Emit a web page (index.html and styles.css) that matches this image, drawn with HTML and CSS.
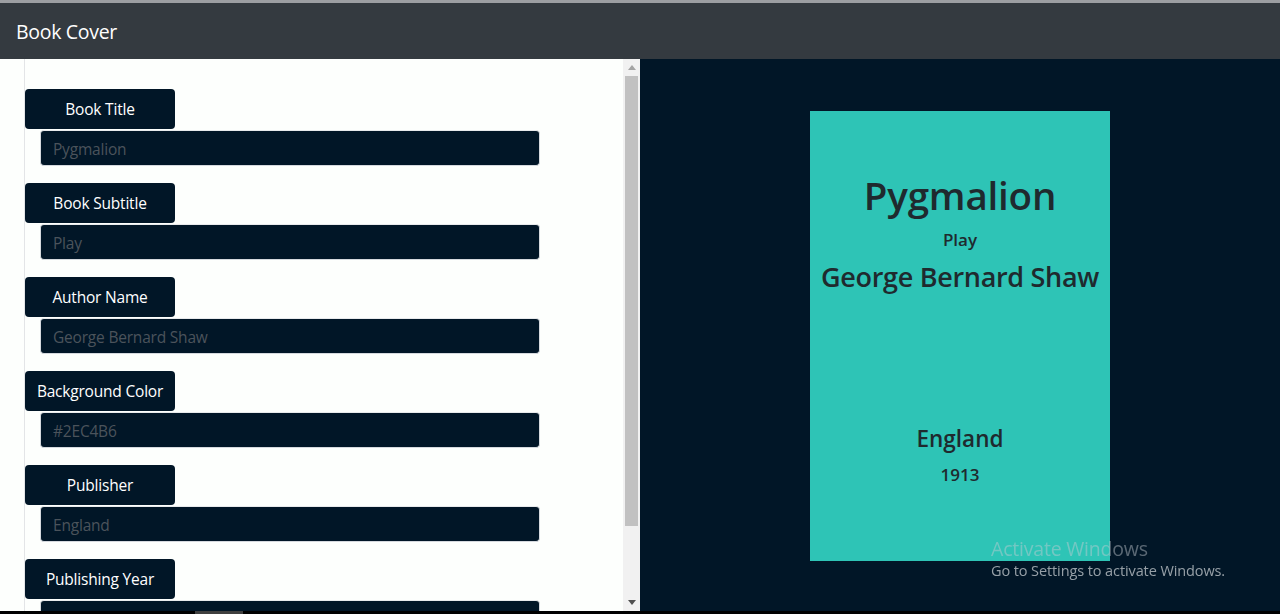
FILE: index.html
```html
<!DOCTYPE html>
<html lang="en">
<head>
<meta charset="utf-8">
<title>Book Cover</title>
<link rel="stylesheet" href="styles.css">
</head>
<body>
<div class="topline"></div>
<header class="navbar"><span class="brand">Book Cover</span></header>
<main class="layout">
  <section class="editor">
    <div class="editor-scroll">
      <form class="form">
        <div class="group">
          <label class="label">Book Title</label>
          <input class="field" type="text" placeholder="Pygmalion">
        </div>
        <div class="group">
          <label class="label">Book Subtitle</label>
          <input class="field" type="text" placeholder="Play">
        </div>
        <div class="group">
          <label class="label">Author Name</label>
          <input class="field" type="text" placeholder="George Bernard Shaw">
        </div>
        <div class="group">
          <label class="label">Background Color</label>
          <input class="field" type="text" placeholder="#2EC4B6">
        </div>
        <div class="group">
          <label class="label">Publisher</label>
          <input class="field" type="text" placeholder="England">
        </div>
        <div class="group">
          <label class="label">Publishing Year</label>
          <input class="field" type="text" placeholder="1913">
        </div>
      </form>
    </div>
    <div class="scrollbar" aria-hidden="true">
      <div class="sb-btn">
        <svg width="8" height="5" viewBox="0 0 8 5"><polygon points="0,5 8,5 4,0" fill="#a3a3a3"/></svg>
      </div>
      <div class="sb-track"><div class="sb-thumb"></div></div>
      <div class="sb-btn">
        <svg width="8" height="5" viewBox="0 0 8 5"><polygon points="0,0 8,0 4,5" fill="#505050"/></svg>
      </div>
    </div>
  </section>
  <section class="preview">
    <div class="cover">
      <h1 class="cover-title">Pygmalion</h1>
      <p class="cover-subtitle">Play</p>
      <h2 class="cover-author">George Bernard Shaw</h2>
      <h3 class="cover-publisher">England</h3>
      <p class="cover-year">1913</p>
    </div>
  </section>
</main>
<div class="bottombar"><span class="bottom-thumb"></span></div>
<div class="watermark">
  <div class="wm-title">Activate Windows</div>
  <div class="wm-sub">Go to Settings to activate Windows.</div>
</div>
</body>
</html>
```

FILE: styles.css
```css
* { box-sizing: border-box; }

html, body {
  margin: 0;
  padding: 0;
  height: 614px;
  overflow: hidden;
}

body {
  display: flex;
  flex-direction: column;
  font-family: "Open Sans", "Noto Sans", sans-serif;
  background: #011627;
}

.topline {
  height: 3px;
  background: #9c9ea2;
  flex: none;
}

.navbar {
  height: 56px;
  flex: none;
  background: #343a40;
  display: flex;
  align-items: center;
  padding-left: 16px;
}

.brand {
  color: #ffffff;
  font-size: 19.5px;
  letter-spacing: -0.3px;
}

.layout {
  height: 552px;
  flex: none;
  display: flex;
}

.editor {
  width: 640px;
  flex: none;
  background: #fdfffd;
  display: flex;
}

.editor-scroll {
  flex: 1;
  overflow: hidden;
}

.scrollbar {
  width: 17px;
  flex: none;
  background: #f1f1f1;
  display: flex;
  flex-direction: column;
}

.sb-btn {
  height: 17px;
  flex: none;
  display: flex;
  align-items: center;
  justify-content: center;
}

.sb-track {
  flex: 1;
  padding: 0 2px;
}

.sb-thumb {
  height: 450px;
  background: #c1c1c1;
}

.form {
  margin: 0 0 0 24px;
  border-left: 1px solid #e3e5e7;
  padding: 30px 0 44px 0;
}

.group {
  display: flex;
  flex-direction: column;
  align-items: flex-start;
  margin-bottom: 17px;
}
.group:last-child { margin-bottom: 0; }

.label {
  width: 150px;
  height: 40px;
  background: #011627;
  color: #ffffff;
  border-radius: 4px;
  display: flex;
  align-items: center;
  justify-content: center;
  font-size: 15.5px;
  letter-spacing: -0.2px;
}

.field {
  width: 500px;
  height: 36px;
  margin: 1px 0 0 15px;
  background: #011627;
  border: 1px solid #d5d9de;
  border-top-color: #e8eaec;
  border-radius: 4px;
  padding: 2px 12px 0 12px;
  font-family: "Open Sans", "Noto Sans", sans-serif;
  font-size: 15.5px;
  letter-spacing: -0.2px;
  color: #ffffff;
  outline: none;
}
.field::placeholder {
  color: #4b535b;
}

.preview {
  flex: 1;
  background: #011627;
  display: flex;
  justify-content: center;
  padding-top: 52px;
}

.cover {
  width: 300px;
  height: 450px;
  background: #2ec4b6;
  color: #1f2a2e;
  display: flex;
  flex-direction: column;
  align-items: center;
  text-align: center;
}

.cover-title {
  margin: 60px 0 0 0;
  font-size: 38.5px;
  font-weight: 600;
  line-height: 48px;
  letter-spacing: -0.2px;
}

.cover-subtitle {
  margin: 9px 0 0 0;
  font-size: 17px;
  line-height: 24px;
  font-weight: 600;
}

.cover-author {
  margin: 8px 0 0 0;
  font-size: 27px;
  line-height: 34px;
  font-weight: 600;
  letter-spacing: -0.3px;
}

.cover-publisher {
  margin: 130px 0 0 0;
  font-size: 22.5px;
  line-height: 29px;
  font-weight: 600;
}

.cover-year {
  margin: 10px 0 0 0;
  font-size: 17px;
  line-height: 24px;
  font-weight: 600;
}

.bottombar {
  height: 3px;
  flex: none;
  background: #000000;
  position: relative;
}
.bottom-thumb {
  position: absolute;
  left: 195px;
  top: 0;
  width: 48px;
  height: 3px;
  background: #3f3f3f;
}

.watermark {
  position: fixed;
  left: 991px;
  top: 536px;
  pointer-events: none;
  font-family: "Open Sans", "Noto Sans", sans-serif;
}
.wm-title {
  font-size: 19.5px;
  line-height: 25px;
  color: rgba(200, 205, 210, 0.45);
  letter-spacing: -0.2px;
}
.wm-sub {
  font-size: 14.5px;
  line-height: 20px;
  color: rgba(200, 205, 210, 0.75);
  letter-spacing: -0.1px;
}
```
